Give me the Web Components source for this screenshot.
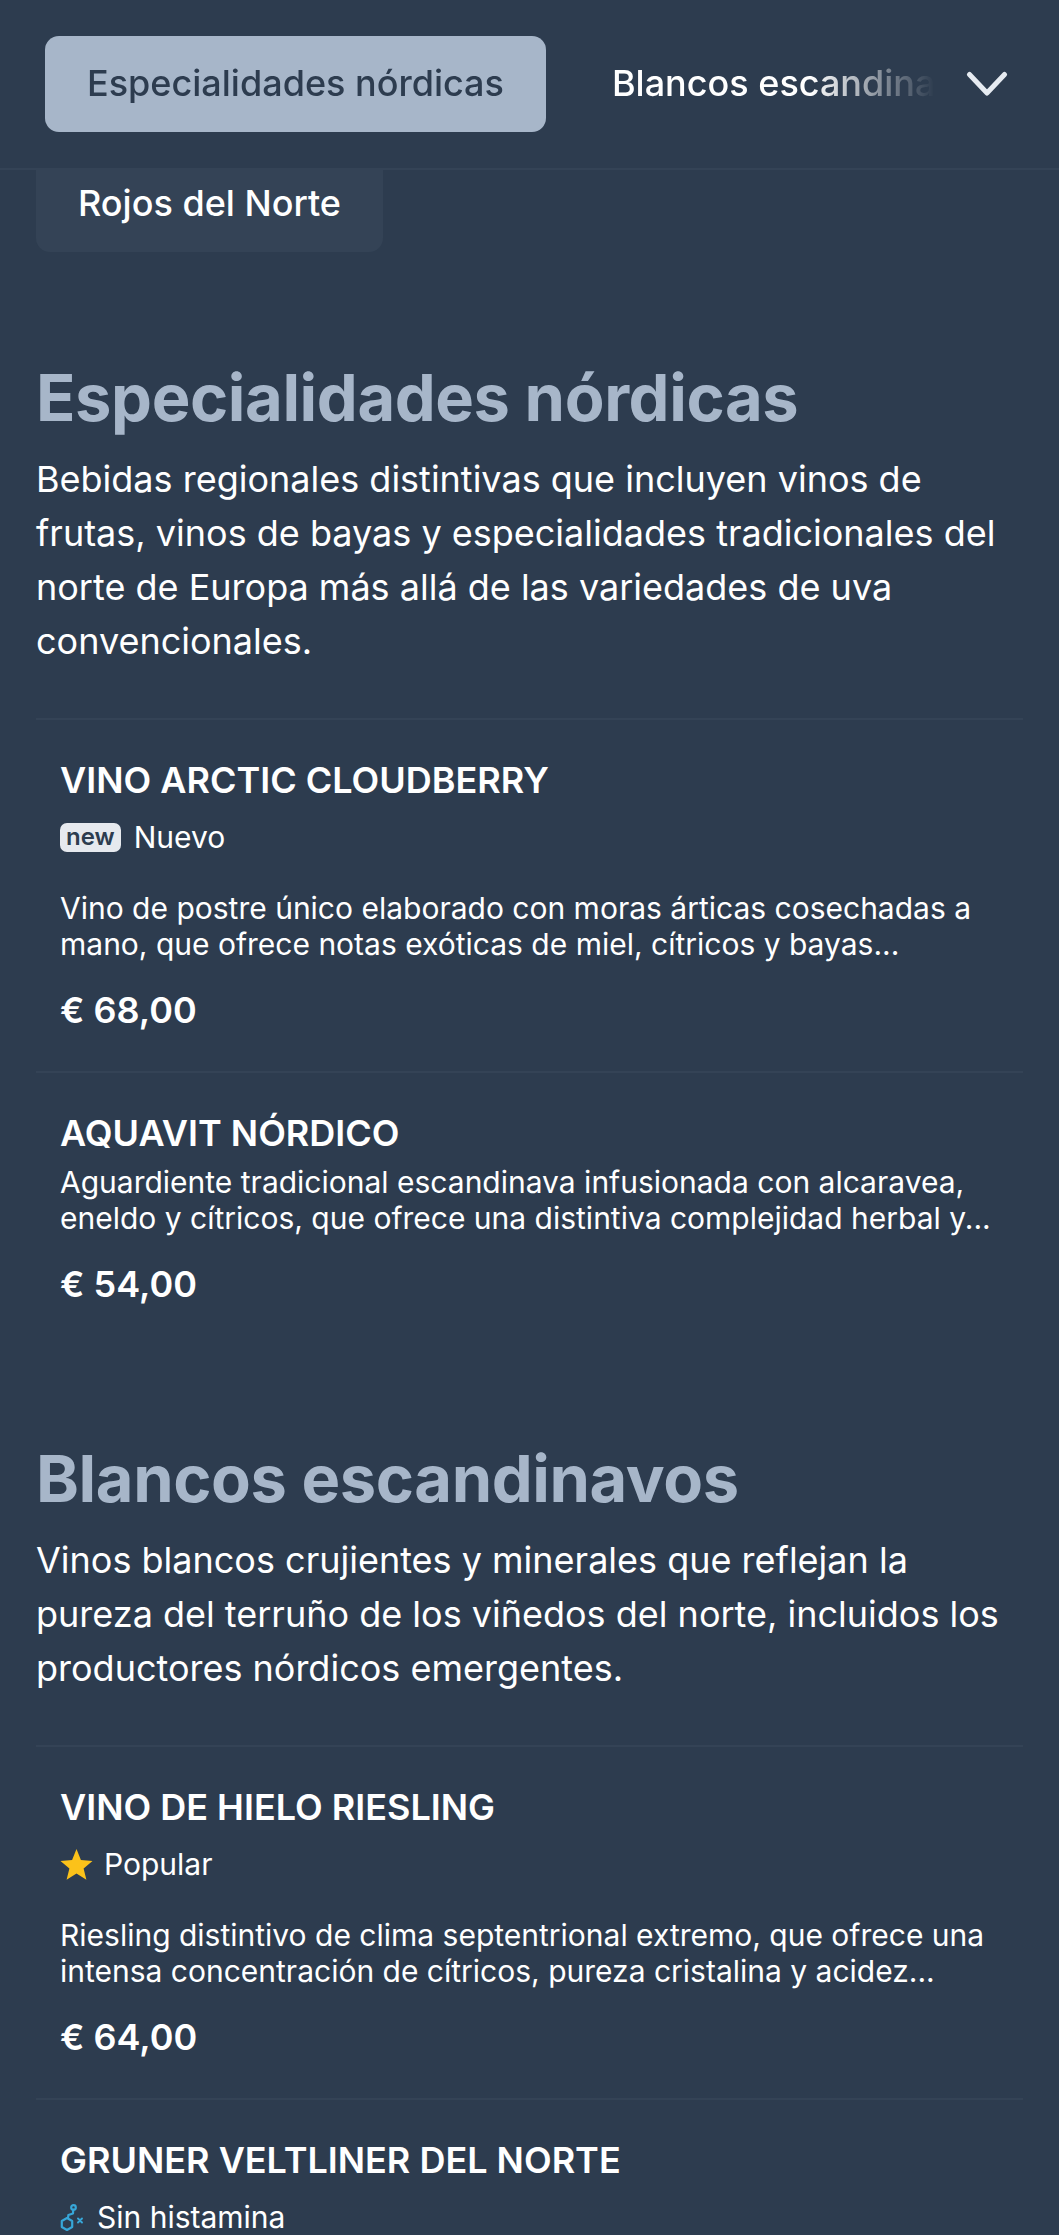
<!DOCTYPE html>
<html lang="es"><head><meta charset="utf-8"><title>Carta</title>
<style>
html,body{margin:0;padding:0;background:#2d3c4f;height:2235px;overflow:hidden}
body{font-family:Inter,"Liberation Sans",sans-serif;color:#fff}
</style></head><body>
<menu-app>
<nav-bar slot="nav">
  <nav-tab active>Especialidades nórdicas</nav-tab>
  <nav-tab>Blancos escandinavos</nav-tab>
</nav-bar>
<menu-section title="Especialidades nórdicas" text="Bebidas regionales distintivas que incluyen vinos de frutas, vinos de bayas y especialidades tradicionales del norte de Europa más allá de las variedades de uva convencionales.">
  <menu-item name="VINO ARCTIC CLOUDBERRY" price="€ 68,00" desc="Vino de postre único elaborado con moras árticas cosechadas a mano, que ofrece notas exóticas de miel, cítricos y bayas..."><item-tag kind="new">Nuevo</item-tag></menu-item>
  <menu-item name="AQUAVIT NÓRDICO" price="€ 54,00" desc="Aguardiente tradicional escandinava infusionada con alcaravea, eneldo y cítricos, que ofrece una distintiva complejidad herbal y..."></menu-item>
</menu-section>
<menu-section title="Blancos escandinavos" text="Vinos blancos crujientes y minerales que reflejan la pureza del terruño de los viñedos del norte, incluidos los productores nórdicos emergentes.">
  <menu-item name="VINO DE HIELO RIESLING" price="€ 64,00" desc="Riesling distintivo de clima septentrional extremo, que ofrece una intensa concentración de cítricos, pureza cristalina y acidez..."><item-tag kind="star">Popular</item-tag></menu-item>
  <menu-item name="GRUNER VELTLINER DEL NORTE"><item-tag kind="hist">Sin histamina</item-tag></menu-item>
</menu-section>
</menu-app>
<script>
function def(name,html){customElements.define(name,class extends HTMLElement{
  constructor(){super();this.attachShadow({mode:'open'});}
  connectedCallback(){this.shadowRoot.innerHTML=typeof html==='function'?html(this):html;}
});}
def('menu-app',`<style>:host{display:block;position:relative}
.body{display:block;padding:170px 36px 0}
.tab{display:block;width:max-content;box-sizing:border-box;height:82px;padding:0 42px;margin-bottom:12px;background:#344356;border-radius:0 0 14px 14px;font-size:36px;font-weight:500;line-height:66px;color:#fff}
</style><slot name="nav"></slot><div class="body"><div class="tab">Rojos del Norte</div><slot></slot></div>`);
def('nav-bar',`<style>:host{display:flex;align-items:flex-start;position:absolute;top:0;left:0;right:0;height:170px;box-sizing:border-box;padding:36px 45px 0;background:#2d3c4f;border-bottom:2px solid #344356;z-index:2}
.scroll{display:flex;flex:0 0 890px;gap:24px;overflow:hidden;-webkit-mask-image:linear-gradient(90deg,#000 0,#000 86%,transparent 100%);mask-image:linear-gradient(90deg,#000 0,#000 86%,transparent 100%)}
svg{width:42px;height:26px;margin:35px 0 0 31px;flex:none}
</style><div class="scroll"><slot></slot></div><svg viewBox="0 0 42 26" fill="none" stroke="#e6ebf1" stroke-width="5" stroke-linecap="round" stroke-linejoin="round"><path d="M3.5 3.5 L21 22 L38.5 3.5"/></svg>`);
def('nav-tab',h=>`<style>:host{display:block;flex:none;height:96px;box-sizing:border-box;padding:0 42px;border-radius:14px;font-size:36px;font-weight:500;line-height:94px;white-space:nowrap;color:#fff}
:host([active]){background:#a7b6c9;color:#2d3c4f}</style><slot></slot>`);
def('menu-section',h=>`<style>:host{display:block}
h2{margin:0;padding-top:94px;font-family:Inter,sans-serif;font-weight:700;font-size:65px;letter-spacing:-.4px;line-height:80px;color:#a7b6c9}
p{margin:0;padding-top:14px;font-size:36px;line-height:54px;color:#fff;padding-bottom:50px}
.items{display:block}
</style><h2>${h.getAttribute('title')}</h2><p>${h.getAttribute('text')}</p><div class="items"><slot></slot></div>`);
def('menu-item',h=>{const d=h.getAttribute('desc'),pr=h.getAttribute('price');return `<style>:host{display:block;border-top:2px solid #344356;padding:30px 24px 39px}
h3{margin:0;font-size:36px;font-weight:600;line-height:61px;color:#fff}
.d{margin:0;font-size:30px;line-height:36px;color:#fff}
.pr{font-size:36px;font-weight:600;line-height:44px;margin-top:26px;color:#fff}
</style><h3>${h.getAttribute('name')}</h3><slot></slot>${d?`<p class="d">${d}</p>`:''}${pr?`<div class="pr">${pr}</div>`:''}`});
def('item-tag',h=>{const k=h.getAttribute('kind');
const icons={new:`<span class="new">new</span>`,
star:`<svg width="33" height="31" viewBox="0 0 33 31"><path fill="#fbc21a" d="M16.5 0l4.4 11 11.6.9-8.9 7.5 2.8 11.4-9.9-6.2-9.9 6.2 2.8-11.4L.5 11.9l11.6-.9z"/></svg>`,
hist:`<svg width="24" height="27" viewBox="0 0 24 27" fill="none" stroke="#37a6d8" stroke-width="2.2" stroke-linejoin="round" stroke-linecap="round"><circle cx="13.5" cy="3.4" r="2.3"/><path d="M13.2 5.8 L13 9.5 L8.4 11 L8 14"/><path d="M7 14 L12.2 17 V23 L7 26 L1.8 23 V17 Z"/><path d="M18 14.5 L22 18.5 M22 14.5 L18 18.5" stroke-width="1.9"/></svg>`};
const gap={new:13,star:11,hist:13}[k];
return `<style>:host{display:flex;align-items:center;gap:${gap}px;height:44px;margin:4px 0 31px;font-size:30px;color:#fff}
.new{display:block;background:#e6e9ee;color:#2d3c4f;font-size:24px;font-weight:600;line-height:28px;height:29px;padding:0 6px;border-radius:7px}
svg{flex:none;display:block}</style>${icons[k]}<span><slot></slot></span>`});
</script>
</body></html>
